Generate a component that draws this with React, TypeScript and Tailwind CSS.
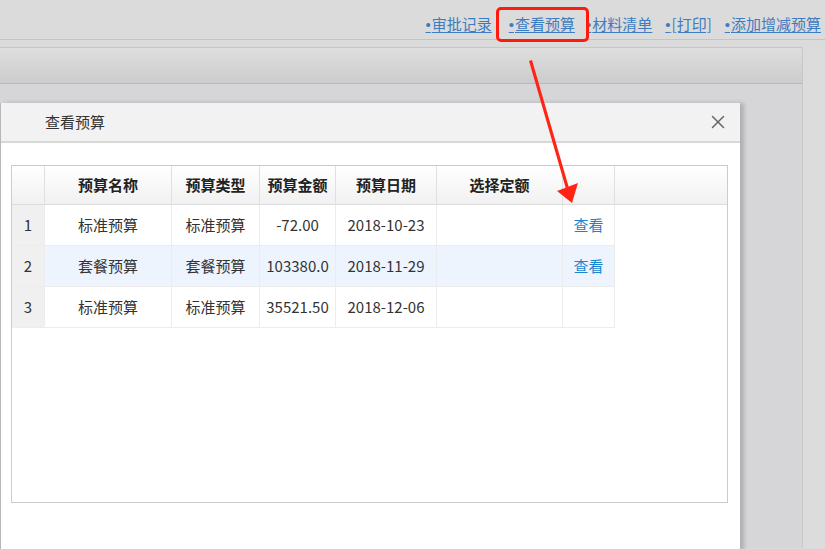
import { X } from "lucide-react";

const font = { fontFamily: '"Microsoft YaHei", "Noto Sans CJK SC", "Noto Sans", sans-serif' };
const bulletFont = { fontFamily: '"Liberation Sans", Arial, sans-serif' };

const links = ["审批记录", "查看预算", "材料清单", "[打印]", "添加增减预算"];

const cols = [
  { key: "no", label: "", w: "w-[33px]" },
  { key: "name", label: "预算名称", w: "w-[127px]" },
  { key: "type", label: "预算类型", w: "w-[88px]" },
  { key: "amount", label: "预算金额", w: "w-[76px]" },
  { key: "date", label: "预算日期", w: "w-[101px]" },
  { key: "quota", label: "选择定额", w: "w-[126px]" },
  { key: "op", label: "", w: "w-[52px]" },
];

const rows = [
  { no: "1", name: "标准预算", type: "标准预算", amount: "-72.00", date: "2018-10-23", quota: "", op: "查看" },
  { no: "2", name: "套餐预算", type: "套餐预算", amount: "103380.0", date: "2018-11-29", quota: "", op: "查看" },
  { no: "3", name: "标准预算", type: "标准预算", amount: "35521.50", date: "2018-12-06", quota: "", op: "" },
];

function BudgetTable() {
  return (
    <div className="h-[338px] w-[717px] border border-[#cccccc] bg-white">
      {/* header */}
      <div className="flex h-[39px] border-b border-[#dcdcdc] bg-gradient-to-b from-white to-[#f1f1f1]">
        {cols.map((c) => (
          <div
            key={c.key}
            className={`${c.w} flex items-center justify-center border-r border-[#e0e0e0] font-bold text-[#222]`}
          >
            {c.label}
          </div>
        ))}
      </div>
      {/* body */}
      {rows.map((r, i) => (
        <div
          key={r.no}
          className={`flex h-[41px] w-[603px] border-b border-[#ececec] ${i === 1 ? "bg-[#edf4fe]" : "bg-white"}`}
        >
          {cols.map((c) => (
            <div
              key={c.key}
              className={`${c.w} flex items-center justify-center border-r border-[#ececec] ${
                c.key === "no" ? "bg-[#f0f0f0]" : ""
              } ${c.key === "op" ? "text-[#1a86d0]" : "text-[#333]"}`}
            >
              {r[c.key as keyof typeof r]}
            </div>
          ))}
        </div>
      ))}
    </div>
  );
}

export default function App() {
  return (
    <div className="relative h-[549px] w-[825px] overflow-hidden bg-[#dbdbdb] text-[15px]" style={font}>
      {/* top links */}
      <div className="flex h-[40px] items-end justify-end pb-[4px] pr-[4px] border-b border-[#c4c4c4]">
        {links.map((l, i) => (
          <a
            key={l}
            href="#"
            className={`leading-[20px] text-[#3d7cc0] underline underline-offset-2 ${
              i === 0 ? "" : i === 1 ? "ml-[17px]" : i === 2 ? "ml-[11px]" : "ml-[13px]"
            }`}
          >
            <span style={bulletFont} className="mr-[1px]">•</span>
            {l}
          </a>
        ))}
      </div>

      <div className="flex h-[508px] pt-[7px]">
        {/* main panel */}
        <div className="flex w-[803px] flex-col border-r border-[#c8c8c8] bg-[#d6d6d8]">
          <div className="h-[37px] border-y border-[#c6c6c6] border-b-[#b9b9b9] bg-gradient-to-b from-[#dedede] to-[#cccccc]" />
        </div>
        <div className="flex-1 bg-[#dcdcdc]" />
      </div>

      {/* dialog */}
      <div className="absolute left-0 top-[103px] flex h-[460px] w-[740px] flex-col border-l border-[#b8b8b8] bg-white shadow-[4px_0_4px_rgba(0,0,0,0.18)]">
        <div className="flex h-[40px] items-center justify-between border-b-2 border-[#d8d8d8] bg-[#f2f2f2] pl-[44px] pr-[11px]">
          <span className="text-[#333]">查看预算</span>
          <X className="h-[22px] w-[22px] text-[#666]" strokeWidth={1.6} />
        </div>
        <div className="pl-[10px] pt-[22px]">
          <BudgetTable />
        </div>
      </div>

      {/* annotation: highlight box */}
      <div className="absolute left-[496px] top-[7px] h-[35px] w-[93px] rounded-[5px] border-[3px] border-[#ff1a0e]" />

      {/* annotation: arrow */}
      <svg className="absolute left-0 top-0" width="825" height="549" viewBox="0 0 825 549">
        <polygon points="529,61 532,60 569,188 566,189" fill="#ff2414" />
        <polygon points="557,191 578,183 572,203" fill="#ff2414" />
      </svg>
    </div>
  );
}
